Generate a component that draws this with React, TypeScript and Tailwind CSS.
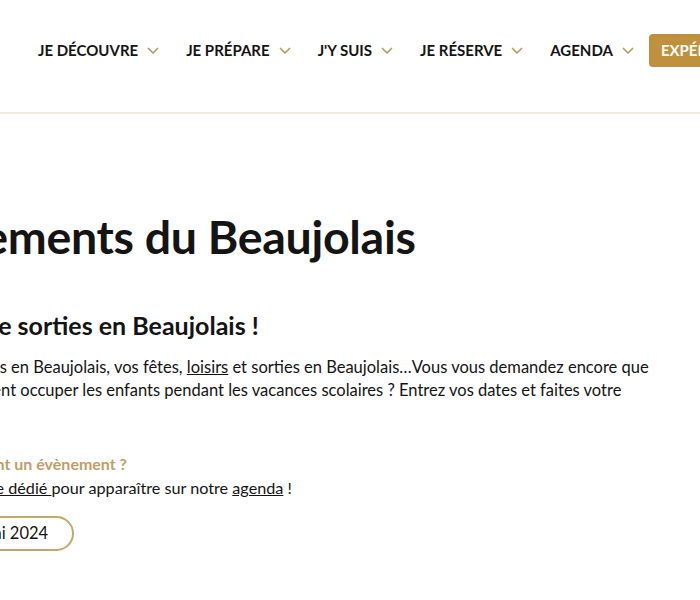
const navItems = ['JE DÉCOUVRE', 'JE PRÉPARE', "J'Y SUIS", 'JE RÉSERVE', 'AGENDA'];

const Chevron = () => (
  <svg className="w-3 h-2 text-[#b99b63]" viewBox="0 0 12 8" fill="none" stroke="currentColor">
    <path d="M1.5 1.5 6 6l4.5-4.5" strokeWidth={1.7} strokeLinecap="round" strokeLinejoin="round" />
  </svg>
);

const App = () => {
  return (
    <div className="w-[700px] h-[600px] overflow-hidden bg-white text-[#141414] font-['Lato','Open_Sans',sans-serif]">
      <header className="h-[114px] border-b-2 border-[#eceae0] flex items-start pt-[34px] pl-[38px]">
        <nav className="flex items-center whitespace-nowrap">
          {navItems.map((item) => (
            <div key={item} className="flex items-center gap-[9px] mr-[27px]">
              <span className="text-[15px] font-bold">{item}</span>
              <Chevron />
            </div>
          ))}
          <button className="h-[33px] -ml-[12px] px-3 rounded bg-[#c0913c] text-white text-[15px] font-bold">
            EXPÉRIENCES
          </button>
        </nav>
      </header>

      <main className="-ml-[193px] w-[950px] whitespace-nowrap">
        <h1 className="mt-[96px] text-[46.5px] leading-[52px] font-bold tracking-[-0.3px]">
          Les évènements du Beaujolais
        </h1>
        <h2 className="mt-[48px] text-[25px] leading-[30px] font-bold">
          Toutes les infos de sorties en Beaujolais !
        </h2>
        <p className="mt-[16px] text-[16.5px] leading-[23px]">
          Découvrez nos évènements en Beaujolais, vos fêtes, <a className="underline">loisirs</a> et sorties en
          Beaujolais…Vous vous demandez encore que
          <br />
          faire ce weekend ? Comment occuper les enfants pendant les vacances scolaires ? Entrez vos dates et faites
          votre
          <br />
          choix !
        </p>
        <p className="mt-[27px] text-[16px] leading-[24px] font-bold text-[#c29d68]">
          Vous montez prochainement un évènement ?
        </p>
        <p className="text-[16.2px] leading-[24px]">
          Remplissez notre <a className="underline">formulaire dédié </a>pour apparaître sur notre{' '}
          <a className="underline">agenda</a> !
        </p>
        <div className="mt-[16px] flex gap-[18px]">
          <button className="h-[35px] px-6 rounded-full border-2 border-[#c7a769] text-[16.5px]">Avril 2024</button>
          <button className="h-[35px] px-6 rounded-full border-2 border-[#c7a769] text-[16.5px]">Mai 2024</button>
        </div>
      </main>
    </div>
  );
};

export default App;
